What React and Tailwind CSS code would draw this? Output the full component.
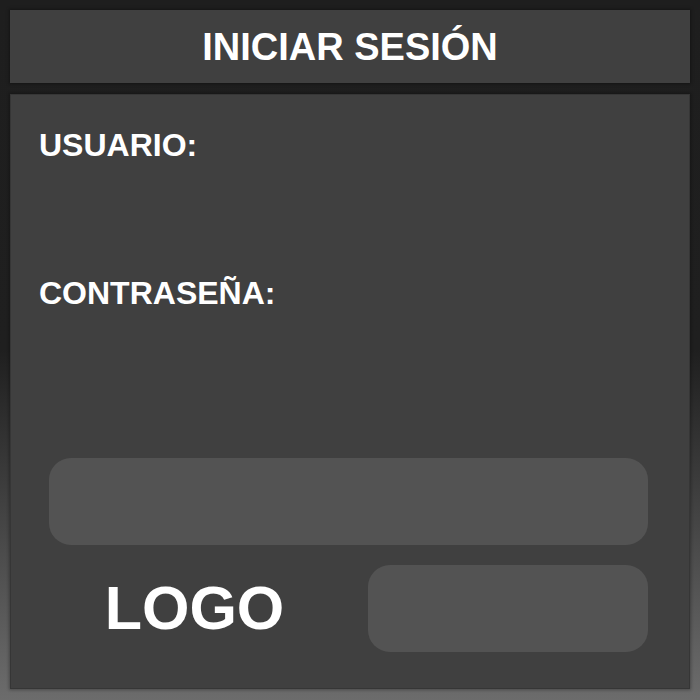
import React from 'react'

function App() {
  return (
    <div
      className="w-[700px] h-[700px] bg-[linear-gradient(to_bottom,#1e1e1e_0%,#1f1f1f_50%,#6c6c6c_100%)] px-[10px] pt-[10px] pb-[11px] flex flex-col gap-[11px]"
      style={{ fontFamily: '"Liberation Sans", Arial, sans-serif' }}
    >
      {/* header */}
      <div className="h-[73px] shrink-0 bg-[#404040] shadow-[0_0_3px_1px_rgba(0,0,0,0.35)] flex items-center justify-center">
        <h1 className="text-white font-bold text-[38px] leading-none">INICIAR SESIÓN</h1>
      </div>

      {/* form panel */}
      <div className="flex-1 bg-[#404040] border border-[#363636] shadow-[0_0_3px_1px_rgba(0,0,0,0.3)] flex flex-col px-[28px] pt-[34px] pb-[36px]">
        <label className="text-white font-bold text-[32px] leading-none">USUARIO:</label>
        <label className="text-white font-bold text-[32px] leading-none mt-[116px]">CONTRASEÑA:</label>

        <div className="mt-auto flex flex-col gap-[20px] pl-[10px] pr-[13px]">
          <button className="h-[87px] w-full bg-[#535353] rounded-[22px]"></button>
          <div className="flex items-center">
            <div className="flex-1 flex justify-center pr-[28px]">
              <span className="text-white font-bold text-[61px] leading-none">LOGO</span>
            </div>
            <button className="h-[87px] w-[280px] bg-[#535353] rounded-[22px]"></button>
          </div>
        </div>
      </div>
    </div>
  )
}

export default App
